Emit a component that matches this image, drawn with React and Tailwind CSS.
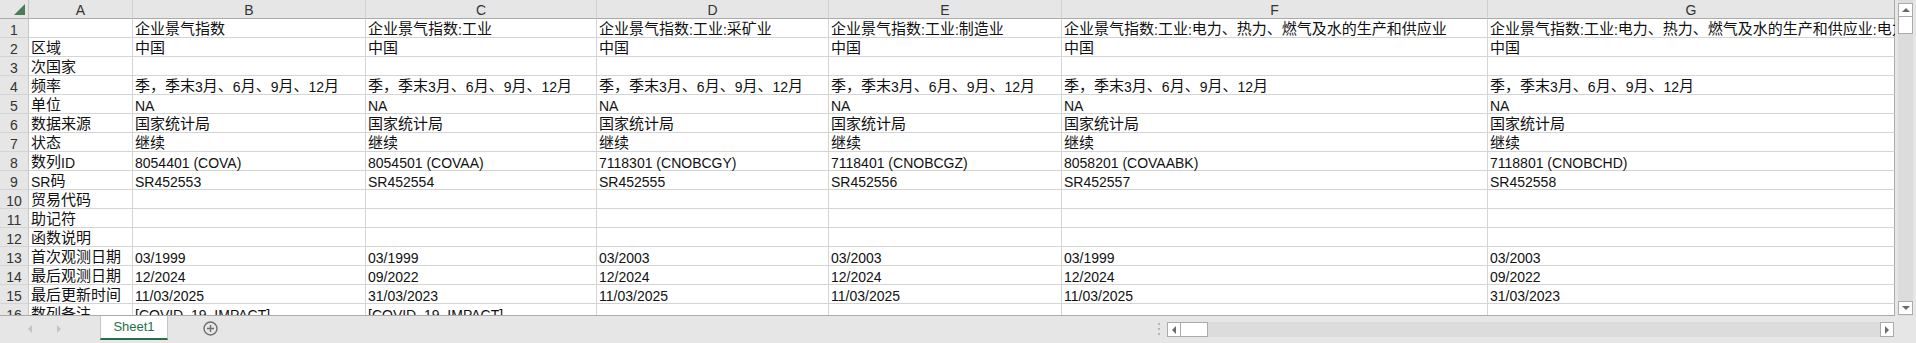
import React from 'react'

const CJK = /([\u3000-\u303f\u3400-\u9fff\uff00-\uffef]+)/

function Txt({ s }) {
  return s.split(CJK).map((part, i) =>
    i % 2 === 1 ? (
      <span key={i} className="text-[15px] leading-[14px] align-[1px] font-['Noto_Sans_CJK_SC']">
        {part}
      </span>
    ) : (
      part
    )
  )
}

const freq = '季，季末3月、6月、9月、12月'

const colA = ['', '区域', '次国家', '频率', '单位', '数据来源', '状态', '数列ID', 'SR码', '贸易代码', '助记符', '函数说明', '首次观测日期', '最后观测日期', '最后更新时间', '数列备注']

const series = [
  ['企业景气指数', '8054401 (COVA)', 'SR452553', '03/1999', '12/2024', '11/03/2025', '[COVID_19_IMPACT]'],
  ['企业景气指数:工业', '8054501 (COVAA)', 'SR452554', '03/1999', '09/2022', '31/03/2023', '[COVID_19_IMPACT]'],
  ['企业景气指数:工业:采矿业', '7118301 (CNOBCGY)', 'SR452555', '03/2003', '12/2024', '11/03/2025', ''],
  ['企业景气指数:工业:制造业', '7118401 (CNOBCGZ)', 'SR452556', '03/2003', '12/2024', '11/03/2025', ''],
  ['企业景气指数:工业:电力、热力、燃气及水的生产和供应业', '8058201 (COVAABK)', 'SR452557', '03/1999', '12/2024', '11/03/2025', ''],
  ['企业景气指数:工业:电力、热力、燃气及水的生产和供应业:电力、热力生产和供应业', '7118801 (CNOBCHD)', 'SR452558', '03/2003', '09/2022', '31/03/2023', ''],
]

const columns = [
  colA,
  ...series.map(([name, id, sr, first, last, upd, note]) => [
    name, '中国', '', freq, 'NA', '国家统计局', '继续', id, sr, '', '', '', first, last, upd, note,
  ]),
]

const letters = ['A', 'B', 'C', 'D', 'E', 'F', 'G']

function Corner() {
  return (
    <div className="h-[19px] border-r border-b border-r-[#c6c6c6] border-b-[#ababab] bg-[#e6e6e6] flex items-end justify-end pr-[3px] pb-[3px]">
      <svg width="11" height="11" viewBox="0 0 11 11">
        <polygon points="11,0 11,11 0,11" fill="#4a7d56" />
      </svg>
    </div>
  )
}

function Arrow({ dir, color = '#6b6b6b' }) {
  const pts = {
    up: '0,5 4,1 8,5',
    down: '0,1 4,5 8,1',
    left: '5,0 1,4 5,8',
    right: '1,0 5,4 1,8',
  }[dir]
  const vertical = dir === 'up' || dir === 'down'
  return (
    <svg width={vertical ? 8 : 6} height={vertical ? 6 : 8} viewBox={vertical ? '0 0 8 6' : '0 0 6 8'}>
      <polygon points={pts} fill={color} />
    </svg>
  )
}

export default function App() {
  return (
    <div className="w-[1916px] h-[343px] overflow-hidden bg-[#e6e6e6] font-['Liberation_Sans','Noto_Sans_CJK_SC',sans-serif] text-[14px] text-[#111]">
      <div className="flex h-[316px]">
        <div className="w-[1895px] h-[316px] overflow-hidden bg-white border-b border-[#ababab]">
          <div className="grid grid-cols-[29px_104px_233px_231px_232px_233px_426px_407px]">
            <Corner />
            {letters.map((l, i) => (
              <div
                key={l}
                className={`h-[19px] border-b border-b-[#ababab] border-r bg-[#e6e6e6] text-center leading-[18px] pt-[1px] text-[#333] ${i === 6 ? 'border-r-[#ababab]' : 'border-r-[#d0d0d0]'}`}
              >
                {l}
              </div>
            ))}
            {colA.map((_, r) => (
              <React.Fragment key={r}>
                <div className="h-[19px] border-r border-b border-r-[#c6c6c6] border-b-[#d4d4d4] bg-[#e6e6e6] text-center leading-[18px] pt-[2px] text-[#333]">
                  {r + 1}
                </div>
                {columns.map((col, c) => (
                  <div
                    key={c}
                    className={`h-[19px] border-b border-r border-b-[#d4d4d4] whitespace-nowrap leading-[18px] pt-[2px] pl-[2px] ${c === 6 ? 'border-r-[#ababab]' : 'border-r-[#d4d4d4]'}`}
                  >
                    <Txt s={col[r]} />
                  </div>
                ))}
              </React.Fragment>
            ))}
          </div>
        </div>
        <div className="w-[21px] h-[316px] pl-[3px]">
          <div className="w-[15px] h-full bg-[#dcdcdc] flex flex-col">
            <div className="mt-[3px] h-[14px] bg-white border border-[#ababab] flex items-center justify-center">
              <Arrow dir="up" />
            </div>
            <div className="h-[17px] bg-white border border-t-0 border-[#ababab]" />
            <div className="flex-1" />
            <div className="h-[14px] mb-[1px] bg-white border border-[#ababab] flex items-center justify-center">
              <Arrow dir="down" />
            </div>
          </div>
        </div>
      </div>
      <div className="flex h-[27px]">
        <div className="w-[100px] flex items-center pb-[1px]">
          <div className="ml-[27px]">
            <Arrow dir="left" color="#c4c4c4" />
          </div>
          <div className="ml-[23px]">
            <Arrow dir="right" color="#c4c4c4" />
          </div>
        </div>
        <div className="w-[68px] h-[24px] bg-white border-x border-[#c6c6c6] border-b-2 border-b-[#217346] flex items-center justify-center text-[13px] text-[#217346]">
          Sheet1
        </div>
        <div className="ml-[35px] flex items-center pb-[2px]">
          <svg width="15" height="15" viewBox="0 0 15 15">
            <circle cx="7.5" cy="7.5" r="6.5" fill="none" stroke="#6e6e6e" strokeWidth="1.4" />
            <path d="M7.5 4v7M4 7.5h7" stroke="#6e6e6e" strokeWidth="1.4" />
          </svg>
        </div>
        <div className="flex-1" />
        <div className="w-[17px] flex flex-col items-center justify-center gap-[3px] pb-[1px]">
          <div className="w-[2px] h-[2px] bg-[#b5b5b5]" />
          <div className="w-[2px] h-[2px] bg-[#b5b5b5]" />
          <div className="w-[2px] h-[2px] bg-[#b5b5b5]" />
        </div>
        <div className="w-[727px] mt-[6px] h-[15px] flex bg-[#dcdcdc]">
          <div className="w-[14px] h-full bg-white border border-[#ababab] flex items-center justify-center">
            <Arrow dir="left" />
          </div>
          <div className="w-[27px] h-full bg-white border border-l-0 border-[#ababab]" />
          <div className="flex-1" />
          <div className="w-[14px] h-full bg-white border border-[#ababab] flex items-center justify-center">
            <Arrow dir="right" />
          </div>
        </div>
        <div className="w-[22px]" />
      </div>
    </div>
  )
}
